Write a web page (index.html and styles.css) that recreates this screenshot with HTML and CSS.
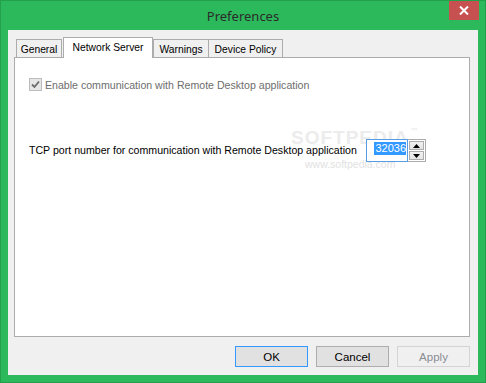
FILE: index.html
```html
<!DOCTYPE html>
<html>
<head>
<meta charset="utf-8">
<link rel="stylesheet" href="styles.css">
</head>
<body>
<div class="window">
  <div class="titlebar">
    <span class="title">Preferences</span>
    <div class="close">
      <svg width="10" height="9" viewBox="0 0 10 9"><path d="M1 0.5 L9 8.5 M9 0.5 L1 8.5" stroke="#fff" stroke-width="2"/></svg>
    </div>
  </div>
  <div class="client">
    <div class="tabs">
      <div class="tab t-general">General</div>
      <div class="tab active t-net">Network Server</div>
      <div class="tab t-warn">Warnings</div>
      <div class="tab t-dev">Device Policy</div>
    </div>
    <div class="panel">
      <div class="wm wm-logo">SOFTPEDIA<span class="tm">™</span></div>
      <div class="wm wm-url">www.softpedia.com</div>
      <div class="check-row">
        <span class="checkbox">
          <svg width="11" height="11" viewBox="0 0 11 11"><path d="M2 5.5 L4.5 8 L9 2.5" fill="none" stroke="#6a6a6a" stroke-width="1.8"/></svg>
        </span>
        <span class="check-label">Enable communication with Remote Desktop application</span>
      </div>
      <div class="port-row">
        <span class="port-label">TCP port number for communication with Remote Desktop application</span>
        <div class="spin">
          <div class="spin-input"><span class="sel">32036</span></div>
          <div class="spin-btns">
            <div class="spin-btn"><svg width="7" height="4" viewBox="0 0 7 4"><path d="M3.5 0 L7 4 L0 4 Z" fill="#000"/></svg></div>
            <div class="spin-btn"><svg width="7" height="4" viewBox="0 0 7 4"><path d="M0 0 L7 0 L3.5 4 Z" fill="#000"/></svg></div>
          </div>
        </div>
      </div>
    </div>
    <div class="buttons">
      <div class="btn default">OK</div>
      <div class="btn">Cancel</div>
      <div class="btn disabled">Apply</div>
    </div>
  </div>
</div>
</body>
</html>
```

FILE: styles.css
```css
* { box-sizing: border-box; }
html, body { margin: 0; padding: 0; background: #2cb95b; }
body {
  font-family: "Liberation Sans", Arial, sans-serif;
  font-size: 10.6px;
  color: #000;
}
.window {
  position: relative;
  width: 486px;
  height: 383px;
  background: #2cb95b;
  border: 1px solid #23a04c;
  display: flex;
  flex-direction: column;
}
.titlebar {
  height: 29px;
  display: flex;
  align-items: center;
  justify-content: center;
}
.title {
  font-family: "Noto Sans", "Open Sans", sans-serif;
  font-size: 13px;
  color: #2b2b2b;
  margin-top: 1px;
}
.close {
  position: absolute;
  top: 0;
  right: 6px;
  width: 30px;
  height: 19px;
  background: #c75050;
  display: flex;
  align-items: center;
  justify-content: center;
}
.client {
  margin: 0 7px 7px 7px;
  flex: 1;
  background: #f0f0f0;
  padding: 7px 8px 0 6px;
  display: flex;
  flex-direction: column;
}
.tabs {
  height: 20px;
  display: flex;
  align-items: flex-end;
  padding-left: 2px;
}
.tab {
  height: 18px;
  border: 1px solid #acacac;
  border-bottom: none;
  background: #f0f0f0;
  display: flex;
  align-items: center;
  justify-content: center;
  white-space: nowrap;
  padding-top: 1px;
  font-size: 10.3px;
}
.t-general { width: 46px; }
.t-net { width: 90px; margin-left: 1px; }
.t-warn { width: 56px; }
.t-dev { width: 75px; margin-left: -1px; }
.tab.active {
  height: 21px;
  margin-bottom: -1px;
  background: #fff;
  position: relative;
  z-index: 1;
  padding-top: 0;
  padding-bottom: 2px;
}
.panel {
  position: relative;
  height: 280px;
  background: #fff;
  border: 1px solid #acacac;
  padding: 20px 0 0 14px;
}
.check-row {
  position: relative;
  display: flex;
  align-items: center;
  height: 13px;
}
.checkbox {
  width: 13px;
  height: 13px;
  border: 1px solid #bcbcbc;
  background: #e6e6e6;
  display: flex;
  align-items: center;
  justify-content: center;
  margin-right: 3px;
}
.check-label { color: #6d6d6d; }
.port-row {
  position: relative;
  margin-top: 48px;
  display: flex;
  align-items: center;
  height: 23px;
}
.port-label { width: 337px; flex: none; white-space: nowrap; padding-bottom: 2px; }
.spin {
  display: flex;
  height: 23px;
}
.spin-input {
  width: 42px;
  border: 1px solid #569de5;
  background: #fff;
  display: flex;
  align-items: center;
  justify-content: flex-end;
  padding-right: 1px;
}
.sel {
  background: #3399ff;
  color: #fff;
  font-size: 11px;
  line-height: 13px;
  padding: 0 0 0 1px;
  margin-bottom: 4px;
}
.spin-btns {
  width: 18px;
  border: 1px solid #acacac;
  border-left: none;
  background: #fff;
  display: flex;
  flex-direction: column;
  padding: 1px;
  gap: 1px;
}
.spin-btn {
  flex: 1;
  border: 1px solid #acacac;
  background: linear-gradient(#f0f0f0, #e5e5e5);
  display: flex;
  align-items: center;
  justify-content: center;
}
.wm {
  position: absolute;
  color: #ececec;
  font-weight: bold;
  white-space: nowrap;
}
.wm-logo {
  left: 276px;
  top: 69px;
  font-size: 19px;
  letter-spacing: 1px;
  font-family: "Liberation Sans", sans-serif;
}
.tm { font-size: 7px; vertical-align: top; margin-left: 2px; }
.wm-url {
  left: 290px;
  top: 100px;
  font-size: 10.5px;
  font-weight: normal;
  color: #e2e2e2;
}
.buttons {
  margin-top: 9px;
  display: flex;
  justify-content: flex-end;
  gap: 8px;
}
.btn {
  width: 73px;
  height: 21px;
  border: 1px solid #adadad;
  background: #e1e1e1;
  display: flex;
  align-items: center;
  justify-content: center;
  font-size: 11.5px;
}
.btn.default { border-color: #3399ff; }
.btn.disabled { border-color: #d4d4d4; background: #f0f0f0; color: #8a8d94; }
```
